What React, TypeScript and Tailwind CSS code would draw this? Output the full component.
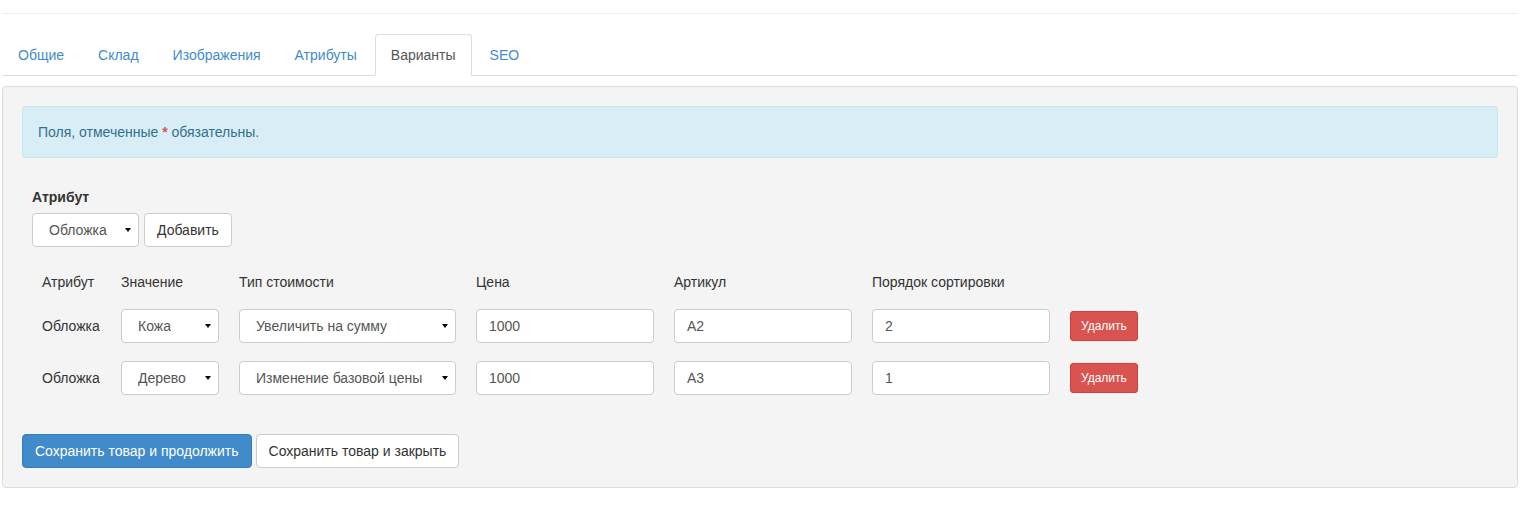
const tabs = ["Общие", "Склад", "Изображения", "Атрибуты", "Варианты", "SEO"];

const rows = [
  { attr: "Обложка", value: "Кожа", type: "Увеличить на сумму", price: "1000", sku: "A2", order: "2" },
  { attr: "Обложка", value: "Дерево", type: "Изменение базовой цены", price: "1000", sku: "A3", order: "1" },
];

function Caret() {
  return (
    <svg width="6" height="4" viewBox="0 0 6 4" className="shrink-0">
      <polygon points="0,0 6,0 3,4" fill="#000" />
    </svg>
  );
}

function FakeSelect({ value, className = "" }: { value: string; className?: string }) {
  return (
    <div
      className={`flex h-[34px] items-center justify-between rounded-[4px] border border-[#ccc] bg-white pl-[16px] pr-[7px] text-[#555] ${className}`}
    >
      <span className="truncate">{value}</span>
      <Caret />
    </div>
  );
}

function TextInput({ value }: { value: string }) {
  return (
    <div className="flex h-[34px] w-full items-center rounded-[4px] border border-[#ccc] bg-white px-[12px] text-[#555]">
      {value}
    </div>
  );
}

export default function App() {
  return (
    <div className="bg-white pl-[2px] pr-[10px] pt-[13px] pb-[17px] font-['Liberation_Sans',Arial,sans-serif] text-[14px] leading-[20px] text-[#333]">
      <div className="border-t border-[#eee]" />

      {/* Tabs */}
      <ul className="mt-[20px] flex border-b border-[#ddd]">
        {tabs.map((t) => {
          const active = t === "Варианты";
          return (
            <li key={t} className="-mb-px mr-[2px]">
              <span
                className={
                  active
                    ? "block rounded-t-[4px] border border-[#ddd] border-b-transparent bg-white px-[15px] py-[10px] text-[#555]"
                    : "block rounded-t-[4px] border border-transparent px-[15px] py-[10px] text-[#428bca]"
                }
              >
                {t}
              </span>
            </li>
          );
        })}
      </ul>

      {/* Panel */}
      <div className="mt-[10px] rounded-[4px] border border-[#ddd] bg-[#f4f4f4] p-[19px]">
        <div className="rounded-[4px] border border-[#bce8f1] bg-[#d9edf7] px-[15px] py-[15px] text-[#31708f]">
          Поля, отмеченные <span className="font-bold text-[#d9534f]">*</span> обязательны.
        </div>

        <div className="mt-[29px] px-[10px]">
          <div className="mb-[6px] font-bold">Атрибут</div>
          <div className="flex gap-[5px]">
            <FakeSelect value="Обложка" className="w-[107px]" />
            <button className="h-[34px] rounded-[4px] border border-[#ccc] bg-white px-[12px] text-[#333]">
              Добавить
            </button>
          </div>

          {/* Variants table */}
          <div className="mt-[16px] grid grid-cols-[79px_118px_237px_198px_198px_198px_1fr]">
            {["Атрибут", "Значение", "Тип стоимости", "Цена", "Артикул", "Порядок сортировки", ""].map((h, i) => (
              <div key={i} className="flex h-[37px] items-center px-[10px]">
                {h}
              </div>
            ))}
            {rows.map((r, i) => (
              <div key={i} className="contents">
                <div className="flex h-[52px] items-center px-[10px]">{r.attr}</div>
                <div className="flex h-[52px] items-center px-[10px]">
                  <FakeSelect value={r.value} className="w-full" />
                </div>
                <div className="flex h-[52px] items-center px-[10px]">
                  <FakeSelect value={r.type} className="w-full" />
                </div>
                <div className="flex h-[52px] items-center px-[10px]">
                  <TextInput value={r.price} />
                </div>
                <div className="flex h-[52px] items-center px-[10px]">
                  <TextInput value={r.sku} />
                </div>
                <div className="flex h-[52px] items-center px-[10px]">
                  <TextInput value={r.order} />
                </div>
                <div className="flex h-[52px] items-center px-[10px]">
                  <button className="h-[30px] rounded-[3px] border border-[#d43f3a] bg-[#d9534f] px-[10px] text-[12px] leading-[18px] text-white">
                    Удалить
                  </button>
                </div>
              </div>
            ))}
          </div>
        </div>

        <div className="mt-[30px] flex gap-[4px]">
          <button className="h-[34px] rounded-[4px] border border-[#357ebd] bg-[#428bca] px-[12px] text-white">
            Сохранить товар и продолжить
          </button>
          <button className="h-[34px] rounded-[4px] border border-[#ccc] bg-white px-[12px] text-[#333]">
            Сохранить товар и закрыть
          </button>
        </div>
      </div>
    </div>
  );
}
